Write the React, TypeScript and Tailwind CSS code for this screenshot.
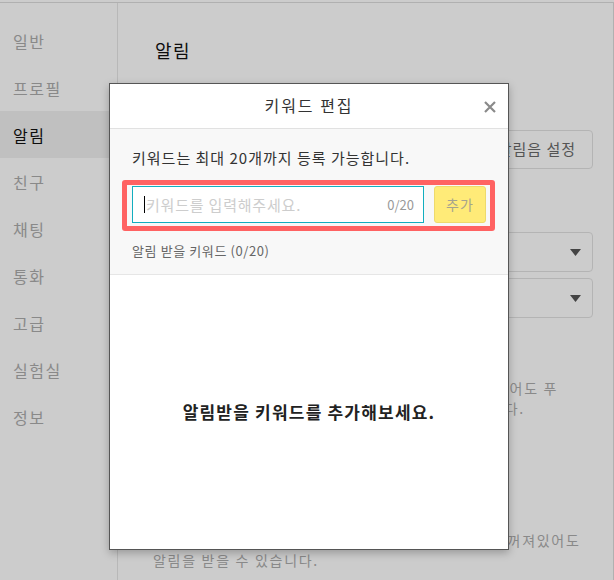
import React from 'react'

const FONT = "font-['Noto_Sans_CJK_KR','Noto_Sans',sans-serif]"

const menu = ['일반', '프로필', '알림', '친구', '채팅', '통화', '고급', '실험실', '정보']

function Caret() {
  return (
    <svg width="11" height="7" viewBox="0 0 11 7" className="shrink-0">
      <path d="M0 0h11L5.5 7z" fill="#555" />
    </svg>
  )
}

function Select() {
  return (
    <div className="h-[40px] border border-[#e2e2e2] rounded-[4px] flex items-center justify-end pr-[11px]">
      <Caret />
    </div>
  )
}

function KeywordModal() {
  return (
    <div className="absolute left-[109px] top-[83px] w-[400px] h-[467px] bg-white border border-[#555] shadow-[0_3px_8px_rgba(0,0,0,0.25)] flex flex-col z-20">
      {/* 헤더 */}
      <div className="relative h-[45px] shrink-0 border-b border-[#e1e1e1] flex items-center justify-center">
        <h2 className="text-[16px] leading-[22px] tracking-[2px] text-[#333] -mt-[2px]">키워드 편집</h2>
        <button type="button" className="absolute right-[12px] top-[17px] p-0">
          <svg width="12" height="12" viewBox="0 0 12 12">
            <path d="M1 1l10 10M11 1L1 11" stroke="#8a8a8a" strokeWidth="2.2" />
          </svg>
        </button>
      </div>

      {/* 입력 영역 */}
      <div className="bg-[#f8f8f8] border-b border-[#e6e6e6] px-[22px] pt-[19px] pb-[15px] shrink-0">
        <p className="text-[15px] leading-[20px] tracking-[1px] text-[#333]">키워드는 최대 20개까지 등록 가능합니다.</p>
        <div className="relative mt-[18px] flex gap-[10px]">
          <div className="absolute -left-[10px] -right-[9px] -top-[6px] -bottom-[8px] border-[5px] border-[#ff6262] rounded-[3px] pointer-events-none" />
          <div className="flex-1 h-[37px] bg-white border border-[#12aebf] flex items-center pl-[11px] pr-[9px]">
            <span className="w-px h-[17px] bg-black mr-px" />
            <input
              type="text"
              placeholder="키워드를 입력해주세요."
              className="flex-1 min-w-0 bg-transparent outline-none text-[15px] leading-[20px] tracking-[0.8px] text-[#333] placeholder:text-[#cdcdcd]"
            />
            <span className="text-[13px] text-[#999]">0/20</span>
          </div>
          <button
            type="button"
            className="w-[52px] h-[37px] rounded-[3px] bg-[#ffeb78] border border-[#eeda6c] text-[14px] tracking-[1px] text-[#a5a38e]"
          >
            추가
          </button>
        </div>
        <p className="mt-[20px] text-[13px] leading-[16px] tracking-[0.6px] text-[#666]">알림 받을 키워드 (0/20)</p>
      </div>

      {/* 빈 목록 */}
      <div className="flex-1 flex items-center justify-center">
        <p className="text-[17px] leading-[22px] tracking-[1.2px] font-bold text-[#222]">알림받을 키워드를 추가해보세요.</p>
      </div>
    </div>
  )
}

export default function App() {
  return (
    <div className={`relative w-[614px] h-[580px] overflow-hidden bg-white ${FONT}`}>
      <div className="mt-[2px] h-[578px] flex border-t border-r border-[#dcdcdc]">
        {/* 사이드바 */}
        <nav className="w-[118px] shrink-0 border-r border-[#e6e6e6] pt-[14px]">
          {menu.map((m) => (
            <div
              key={m}
              className={
                m === '알림'
                  ? 'h-[47px] flex items-center pl-[13px] text-[16px] tracking-[1.5px] bg-[#f0f0f0] text-[#111]'
                  : 'h-[47px] flex items-center pl-[13px] text-[16px] tracking-[1.5px] text-[#acacac]'
              }
            >
              {m}
            </div>
          ))}
        </nav>

        {/* 본문 */}
        <main className="flex-1 pl-[37px] pr-[20px] pt-[35px]">
          <h1 className="text-[18px] leading-[24px] tracking-[1.5px] text-[#111]">알림</h1>
          <div className="mt-[68px] flex justify-end">
            <button type="button" className="h-[39px] px-[16px] border border-[#e2e2e2] rounded-[4px] text-[15px] tracking-[1px] text-[#6a6a6a]">
              방해금지 알림음 설정
            </button>
          </div>
          <div className="mt-[63px] flex flex-col gap-[6px]">
            <Select />
            <Select />
          </div>
          <div className="mt-[60px] text-[14px] leading-[20px] tracking-[1.7px] text-[#acacac] whitespace-nowrap">
            <p>지정한 키워드가 포함된 메시지 채팅방 알림이 꺼져 있어도 푸</p>
            <p>시 알림을 받을 수 있고 채팅방 목록에서 볼 수 있습니다.</p>
          </div>
          <div className="mt-[112px] -ml-[2px] text-[14px] leading-[20px] tracking-[1.7px] text-[#acacac] whitespace-nowrap">
            <p>키워드 알림은 채팅방의 알림 설정과 관계없이 알림이 꺼져있어도</p>
            <p>알림을 받을 수 있습니다.</p>
          </div>
        </main>
      </div>

      {/* 딤 처리 */}
      <div className="absolute inset-0 bg-black/20 z-10" />

      <KeywordModal />
    </div>
  )
}
